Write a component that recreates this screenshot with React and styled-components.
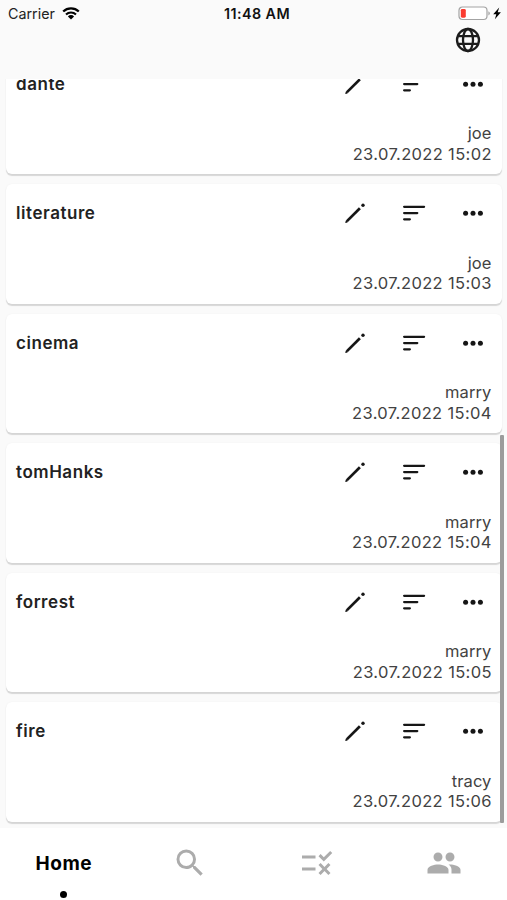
import styled, { createGlobalStyle } from 'styled-components';
import { MdPeople, MdRule, MdSearch } from 'react-icons/md';

const GlobalStyle = createGlobalStyle`
  * {
    box-sizing: border-box;
  }
  body {
    margin: 0;
    background-color: #fafafa;
    font-family: Inter, 'Liberation Sans', sans-serif;
  }
`;
const Screen = styled.div`
  width: 507px;
  height: 900px;
  display: flex;
  flex-direction: column;
  overflow: hidden;
  background-color: #fafafa;
`;
const StatusBar = styled.div`
  height: 27px;
  padding: 0 4px 0 8px;
  display: grid;
  grid-template-columns: 1fr auto 1fr;
  align-items: center;
  color: #222;
`;
const Carrier = styled.div`
  display: flex;
  align-items: center;
  gap: 7px;
  font-size: 14.3px;
`;
const Clock = styled.span`
  padding-left: 3px;
  font-size: 14.3px;
  font-weight: 600;
  letter-spacing: 0.45px;
  color: #111;
`;
const Battery = styled.div`
  display: flex;
  justify-content: flex-end;
`;
const Header = styled.div`
  height: 52px;
  padding: 0 26px 0 0;
  display: flex;
  justify-content: flex-end;
  align-items: flex-start;
  color: #1c1c1c;
`;
const List = styled.div`
  position: relative;
  flex: 1;
  min-height: 0;
  padding: 0 5px 6.5px 6px;
  display: flex;
  flex-direction: column;
  justify-content: flex-end;
  gap: 10px;
  overflow: hidden;
`;
const ScrollThumb = styled.div`
  position: absolute;
  right: 3px;
  bottom: 5px;
  width: 4px;
  height: 388px;
  border-radius: 1px;
  background-color: #9c9c9c;
`;
const Card = styled.div`
  flex: none;
  height: 119.5px;
  padding: 14px 10.5px 9.5px 10px;
  display: flex;
  flex-direction: column;
  justify-content: space-between;
  background-color: #fff;
  border-radius: 6px;
  box-shadow: 0 1.5px 1px rgba(0, 0, 0, 0.14), 0 0 2px rgba(0, 0, 0, 0.04);
`;
const CardTop = styled.div`
  height: 30px;
  display: flex;
  justify-content: space-between;
  align-items: center;
`;
const Title = styled.span`
  font-size: 17px;
  font-weight: 600;
  letter-spacing: 0.55px;
  color: #222;
`;
const Actions = styled.div`
  display: flex;
  gap: 35px;
  margin-right: 6.5px;
  color: #161616;
  svg {
    display: block;
  }
`;
const CardInfo = styled.div`
  display: flex;
  flex-direction: column;
  align-items: flex-end;
  font-size: 16.5px;
  line-height: 20.7px;
  letter-spacing: 0.1px;
  color: #424242;
`;
const DateText = styled.span`
  letter-spacing: 0.35px;
  margin-right: -0.35px;
`;
const NavBar = styled.div`
  height: 72px;
  display: grid;
  grid-template-columns: repeat(4, 1fr);
  background-color: #fff;
`;
const NavItem = styled.div`
  position: relative;
  height: 70px;
  display: flex;
  justify-content: center;
  align-items: center;
  color: ${props => (props.$active ? '#000' : '#acacac')};
  font-size: 19px;
  font-weight: 700;
  letter-spacing: 0.5px;
`;
const NavLabel = styled.span`
  padding: 1px 0 0 1px;
`;
const ActiveDot = styled.span`
  position: absolute;
  bottom: 0.5px;
  left: calc(50% - 3px);
  width: 7px;
  height: 7px;
  border-radius: 50%;
  background-color: #000;
`;

const WifiIcon = () => (
  <svg width='18' height='13' viewBox='0 0 18 13' fill='none' stroke='#000'>
    <path d='M1.2 4.5a11.2 11.2 0 0 1 15.6 0' strokeWidth='2.3' />
    <path d='M4 7.5a7.2 7.2 0 0 1 10 0' strokeWidth='2.1' />
    <path d='M9 12.5 5.9 9.4a4.4 4.4 0 0 1 6.2 0z' fill='#000' stroke='none' />
  </svg>
);
const BatteryIcon = () => (
  <svg width='45' height='15' viewBox='0 0 45 15'>
    <rect
      x='1'
      y='1'
      width='28'
      height='12.5'
      rx='3.5'
      fill='#fff'
      stroke='#a3a3a3'
      strokeWidth='1.2'
    />
    <rect x='2.8' y='2.9' width='5' height='8.8' rx='1.4' fill='#fa3b30' />
    <path d='M30.4 5.2q3 2 0 4.4z' fill='#a3a3a3' />
    <path d='m41.2 1.5-6 6.8h3.1l-1.4 4.9 6-6.9h-3.2z' fill='#000' />
  </svg>
);
const GlobeIcon = () => (
  <svg
    width='26'
    height='26'
    viewBox='0 0 26 26'
    fill='none'
    stroke='currentColor'
    strokeWidth='2.3'
  >
    <circle cx='13' cy='13' r='11' />
    <ellipse cx='13' cy='13' rx='5' ry='11' />
    <path d='M3 9.2h20M3 16.8h20' />
  </svg>
);
const PencilIcon = () => (
  <svg width='24' height='24' viewBox='0 0 24 24' fill='currentColor'>
    <path
      d='M4 20.1 16.9 7.3'
      stroke='currentColor'
      strokeWidth='2.7'
      strokeLinecap='butt'
    />
    <path d='m3.1 19-.8 2.3q-.1.8.7.6l2.2-.8z' />
    <circle cx='20' cy='4.3' r='1.7' />
  </svg>
);
const SortIcon = () => (
  <svg
    width='24'
    height='24'
    viewBox='0 0 24 24'
    stroke='currentColor'
    strokeWidth='2.2'
    strokeLinecap='round'
  >
    <path d='M2.1 5.8h20M2.1 12.1h13.2M2.1 18.3h5.8' />
  </svg>
);
const MoreIcon = () => (
  <svg width='24' height='24' viewBox='0 0 24 24' fill='currentColor'>
    <circle cx='4.6' cy='12.3' r='2.5' />
    <circle cx='12' cy='12.3' r='2.5' />
    <circle cx='19.4' cy='12.3' r='2.5' />
  </svg>
);

const entries = [
  { title: 'dante', author: 'joe', date: '23.07.2022 15:02' },
  { title: 'literature', author: 'joe', date: '23.07.2022 15:03' },
  { title: 'cinema', author: 'marry', date: '23.07.2022 15:04' },
  { title: 'tomHanks', author: 'marry', date: '23.07.2022 15:04' },
  { title: 'forrest', author: 'marry', date: '23.07.2022 15:05' },
  { title: 'fire', author: 'tracy', date: '23.07.2022 15:06' },
];

export default function App() {
  return (
    <Screen>
      <GlobalStyle />
      <StatusBar>
        <Carrier>
          Carrier
          <WifiIcon />
        </Carrier>
        <Clock>11:48 AM</Clock>
        <Battery>
          <BatteryIcon />
        </Battery>
      </StatusBar>
      <Header>
        <GlobeIcon />
      </Header>
      <List>
        {entries.map(entry => (
          <Card key={entry.title}>
            <CardTop>
              <Title>{entry.title}</Title>
              <Actions>
                <PencilIcon />
                <SortIcon />
                <MoreIcon />
              </Actions>
            </CardTop>
            <CardInfo>
              <span>{entry.author}</span>
              <DateText>{entry.date}</DateText>
            </CardInfo>
          </Card>
        ))}
        <ScrollThumb />
      </List>
      <NavBar>
        <NavItem $active>
          <NavLabel>Home</NavLabel>
          <ActiveDot />
        </NavItem>
        <NavItem>
          <MdSearch size={36} />
        </NavItem>
        <NavItem>
          <MdRule size={36} />
        </NavItem>
        <NavItem>
          <MdPeople size={36} />
        </NavItem>
      </NavBar>
    </Screen>
  );
}
